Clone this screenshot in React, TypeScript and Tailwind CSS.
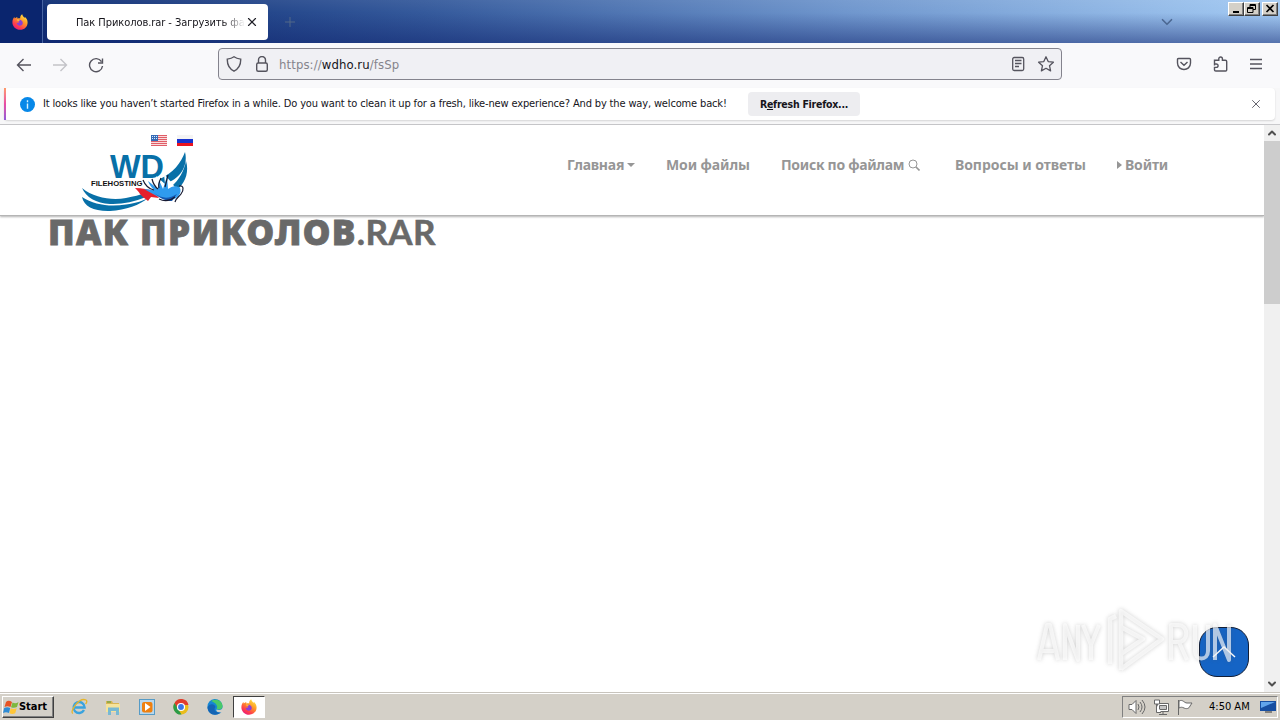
import type { ReactNode } from 'react'
import { ChevronDown, ChevronUp, Plus, X } from 'lucide-react'

interface IconProps {
    className?: string
}

interface NavItemProps {
    className: string
    children: ReactNode
}

function FirefoxIcon({ className }: IconProps) {
    return (
        <svg viewBox="0 0 16 16" className={className}>
            <defs>
                <linearGradient id="fx-body" x1="0.85" y1="0" x2="0.2" y2="1">
                    <stop offset="0" stopColor="#fff04a" />
                    <stop offset="0.4" stopColor="#ff9a26" />
                    <stop offset="0.75" stopColor="#ff3d4c" />
                    <stop offset="1" stopColor="#e31587" />
                </linearGradient>
            </defs>
            <path
                d="M10.2 0.2c.3 1.6 1.2 2.5 2.5 3.7.2-.3.1-.8 0-1.2 1.900 1.400 2.900 3.500 2.900 5.700 0 4.200-3.300 7.400-7.500 7.400S.4 12.500.4 8.500c0-2.300.8-4.100 2-5.400l.4 1.500C3.500 3.700 4.500 3.100 5.500 3.200c-.3.4-.3.9-.1 1.300 1-.5 2-.4 2.800-.2C8 2.700 8.700 1.200 10.200.2z"
                fill="url(#fx-body)"
            />
            <path d="M5.600 6.200c1.300-.7 3-.6 4.200.5 1.300 1.200 1.300 3.200.1 4.300-1.200 1-3 1-4.100 0-.8-.7-1.200-1.500-1.100-2.400 1 .6 2 .3 2.800-.5-.7-.3-1.500-.9-1.900-1.900z" fill="#8a3fd6" />
            <path d="M5 5.500c1.300-.4 2.100 0 2.900.7l-1.800 1.300C5.400 7 4.800 6.300 5 5.500z" fill="#ffb638" />
        </svg>
    )
}

function CaptionButton({ className = '', children }: { className?: string; children: ReactNode }) {
    return (
        <div className={`h-[14px] w-4 border border-t-white border-r-[#404040] border-b-[#404040] border-l-white bg-[#d4d0c8] shadow-[inset_-1px_-1px_0_#808080] ${className}`}>
            <svg viewBox="0 0 14 12" className="h-3 w-3.5" fill="none" stroke="black">
                {children}
            </svg>
        </div>
    )
}

function TitleBar() {
    return (
        <div className="relative flex h-[43px] bg-[linear-gradient(to_bottom,rgba(255,255,255,0.06),rgba(0,0,60,0)_30%,rgba(16,36,110,0.52)),linear-gradient(to_right,#0a286f,#34599b_33%,#6f96cd_66%,#a3caf3)]">
            <div className="flex w-[43px] items-center justify-center border-r border-[#4764a2] bg-[#0a256e] pr-0.5">
                <FirefoxIcon className="size-4" />
            </div>
            <div className="mt-1 ml-1 flex h-9 w-[221px] items-center rounded-[4px] bg-white">
                <div className="ml-[29px] w-[169px] overflow-hidden pt-0.5 text-[11px] tracking-[-0.07px] whitespace-nowrap text-[#15141a] [mask-image:linear-gradient(to_right,black_148px,transparent)]">
                    Пак Приколов.rar - Загрузить файл
                </div>
                <X className="size-3.5 text-[#202028]" strokeWidth={2} />
            </div>
            <Plus className="mt-[14px] ml-[14px] size-4 text-[#526888]" strokeWidth={1.500} />
            <ChevronDown className="mt-[13px] ml-[860px] size-[18px] text-[#4c6892]" strokeWidth={2.200} />
            <div className="absolute top-[2px] right-[2px] flex">
                <CaptionButton>
                    <path d="M4 9h6" strokeWidth="2" />
                </CaptionButton>
                <CaptionButton>
                    <path d="M5 4V1.500h5.500v5H8M5 2.500h5.500M2.500 4.500H8v5H2.500zM2.500 5.500H8" />
                </CaptionButton>
                <CaptionButton className="ml-0.5">
                    <path d="M3.500 2l7 7M10.500 2l-7 7" strokeWidth="1.700" />
                </CaptionButton>
            </div>
        </div>
    )
}

function Toolbar() {
    return (
        <div className="flex h-[45px] items-center bg-[#f9f9fb] pb-[3px] text-[#55545e]">
            <svg viewBox="0 0 90 16" className="mt-px ml-4 h-4 w-[90px]" fill="none" stroke="currentColor" strokeWidth="1.400">
                <path d="M15 8H1.500M7.500 2L1.500 8l6 6" />
                <path d="M37 8h13.500M44.500 2l6 6-6 6" stroke="#c3c3c8" />
                <path d="M85.500 4.600A6.500 6.500 0 1 0 86.500 9M86.500 1.500v4.500H82" />
            </svg>
            <div className="ml-[112px] flex h-8 w-[844px] items-center rounded-[4px] border border-[#84838d] bg-[#f0f0f4]">
                <svg viewBox="0 0 44 16" className="ml-[7px] h-4 w-11" fill="none" stroke="currentColor" strokeWidth="1.400">
                    <path d="M8 .8C10 2.300 12 2.800 14.700 3.100 14.900 8.500 12.500 13 8 15.200 3.500 13 1.100 8.500 1.300 3.100 4 2.800 6 2.300 8 .8z" />
                    <rect x="30.700" y="7" width="10.600" height="8.200" rx="1.500" />
                    <path d="M32.500 7V4a3.500 3.500 0 0 1 7 0v3" />
                </svg>
                <div className="ml-[9px] pt-0.5 text-[13px] tracking-[0.1px] text-[#85848c]">
                    https://<span className="text-[#15141a]">wdho.ru</span>/fsSp
                </div>
                <svg viewBox="0 0 46 18" className="mr-[5px] ml-auto h-[18px] w-[46px]" fill="none" stroke="currentColor" strokeWidth="1.300">
                    <rect x="2.700" y="2.500" width="11" height="13" rx="1.500" />
                    <path d="M5 5.500h6.500M5 8.500h6.500M5 11.500h4" />
                    <path d="M36 1.800l2.200 4.800 5.200.6-3.900 3.500 1.100 5.200-4.600-2.600-4.600 2.600 1.100-5.200-3.900-3.500 5.200-.6z" strokeLinejoin="round" />
                </svg>
            </div>
            <svg viewBox="0 0 88 16" className="mr-4 ml-auto h-4 w-[88px]" fill="none" stroke="currentColor" strokeWidth="1.400">
                <path d="M2.500 2.500h11c.8 0 1 .4 1 1V7c0 8.700-13 8.700-13 0V3.500c0-.6.200-1 1-1zM4.500 6L8 9.300 11.500 6" />
                <path d="M38.500 9.500v-5.300h4.300V2.800c0-2.500 3.600-2.500 3.600 0v1.400h3c.8 0 1.300.4 1.300 1.200v8.600c0 .6-.4 1-1 1h-9.900c-.8 0-1.300-.4-1.300-1v-2.600h1.700c2.500 0 2.500-3.400 0-3.400h-1.700" />
                <path d="M74 3.500h12M74 8h12M74 12.500h12" />
            </svg>
        </div>
    )
}

function NotificationBar() {
    return (
        <div className="h-[37px] border-b border-[#c9c9cc] bg-[#f7f7f8] pr-[5px] pl-1">
            <div className="flex h-8 items-center rounded-[4px] bg-white shadow-[0_1px_2px_rgba(0,0,0,0.14)]">
                <div className="h-full w-0.5 bg-linear-to-b from-[#ff9a68] via-[#e84ba4] to-[#9059d8]" />
                <svg viewBox="0 0 16 16" className="ml-[14px] size-[15px]">
                    <circle cx="8" cy="8" r="8" fill="#0788e8" />
                    <path d="M8 3.500v2M8 7v5.500" stroke="#d9f2ff" strokeWidth="1.500" />
                </svg>
                <div className="ml-2 w-[685px] text-[11px] tracking-[-0.15px] whitespace-nowrap text-[#15141a]">
                    It looks like you haven’t started Firefox in a while. Do you want to clean it up for a fresh, like-new experience? And by the way, welcome back!
                </div>
                <button className="ml-5 h-6 w-[112px] rounded-[4px] bg-[#ededf0] pt-px text-[10.500px] font-bold tracking-[-0.25px] whitespace-nowrap text-[#15141a]">
                    R<span className="underline">e</span>fresh Firefox...
                </button>
                <X className="mr-3 ml-auto size-3.5 text-[#65646d]" strokeWidth={1.700} />
            </div>
        </div>
    )
}

function SiteLogo() {
    return (
        <svg viewBox="0 0 112 61" className="h-[61px] w-28">
            <g fill="#0870a8">
                <path d="M0 37c12 10 30 12.500 44 10 8-1.500 14-3 18-5l2 4c-12 5-24 7.500-36 7C14 52.500 4 46 0 37z" />
                <path d="M0 46c12 8 28 10 44 7.500 10-1.500 18-4 22-6.500-8 7-22 12-38 13C12 60.500 2 55.500 0 46z" />
                <path d="M78 28C91 22 99 12 103 1c2 8 0 16-5 22-4 5-11 9-20 11z" />
                <path d="M90 35c7-6 12-15 14-25 3 10 0 20-7 27z" />
            </g>
            <text x="28" y="27.300" textLength="54" lengthAdjust="spacingAndGlyphs" fontFamily="Liberation Sans" fontWeight="700" fontSize="33" fill="#0870a8">WD</text>
            <path d="M60 29c4 3 6 6 12 10l14 7 8-8-4-6-8-9 1 10-9-8 2 9z" fill="white" />
            <text x="9" y="34.700" textLength="51.500" lengthAdjust="spacingAndGlyphs" fontFamily="Liberation Sans" fontWeight="700" fontSize="7" fill="#111111">FILEHOSTING</text>
            <path d="M53 37c7 0 14 1 19 4l5 6-8-1-3 4-5-4-3-3c-1-2-3-4-5-6z" fill="#e5202c" />
            <path d="M62 38l10 1c-3-3-5-6-6-9l10 8 1-9 4 9 4-13 1 13c4-3 8-4 12-1 2 5-2 10-8 12-6 1-14-3-28-11z" fill="#2f9bee" />
            <path d="M72 42c8 6 15 6 23 1l-5 7c-6 0-11-2-18-8z" fill="#1558b0" />
            <path d="M61 29c2 5 6 9 11 10M70 28c1 4 2 7 6 10M79 27c-2 4-3 7-2 10M86 24l-3 12M77 48c6 3 11 2 16-2M97 35c5-1 5 4 2 8-2 3-5 4-6 8" fill="none" stroke="#171a32" strokeWidth="1.200" />
        </svg>
    )
}

function NavItem({ className, children }: NavItemProps) {
    return <a className={`flex items-center whitespace-nowrap ${className}`}>{children}</a>
}

function SiteHeader() {
    return (
        <header className="flex h-[91px] items-start border-b border-[#b5b5b5] bg-white shadow-[0_1px_2px_rgba(0,0,0,0.3)]">
            <div className="ml-[82px] w-28 pt-[10px]">
                <div className="flex justify-end gap-[10px] pr-px">
                    <svg viewBox="0 0 16 11" className="h-[11px] w-4">
                        <path d="M0 0h16v11H0z" fill="#f9dadb" />
                        <path d="M0 .5h16M0 2.500h16M0 4.500h16M0 6.500h16M0 8.500h16M0 10.500h16" stroke="#e05d67" />
                        <path d="M0 0h7v6H0z" fill="#356bb5" />
                        <path d="M1 1.500h5M1 3.500h5" stroke="#d8e8ff" strokeDasharray="1 1" />
                    </svg>
                    <svg viewBox="0 0 16 11" className="h-[11px] w-4">
                        <path d="M0 0h16v4H0z" fill="#f4f4f4" />
                        <path d="M0 4h16v4H0z" fill="#1733ce" />
                        <path d="M0 8h16v3H0z" fill="#ea1420" />
                    </svg>
                </div>
                <div className="pt-[5px]">
                    <SiteLogo />
                </div>
            </div>
            <nav className="flex pt-[30px] font-['Noto_Sans'] text-sm leading-5 font-bold text-[#969696]">
                <NavItem className="ml-[373px] w-[99px] tracking-[-0.25px]">
                    Главная
                    <svg viewBox="0 0 8 4" className="ml-[3px] h-1 w-2"><path d="M0 0h8L4 4z" fill="currentColor" /></svg>
                </NavItem>
                <NavItem className="w-[115px] tracking-[-0.1px]">Мои файлы</NavItem>
                <NavItem className="w-[174px] tracking-[-0.3px]">
                    Поиск по файлам
                    <svg viewBox="0 0 12 12" className="ml-1 size-3" fill="none" stroke="currentColor">
                        <circle cx="5" cy="5" r="4" />
                        <path d="M8 8l3.500 3.500" strokeWidth="1.600" />
                    </svg>
                </NavItem>
                <NavItem className="w-[162px] tracking-[-0.05px]">Вопросы и ответы</NavItem>
                <NavItem className="tracking-[-0.15px]">
                    <svg viewBox="0 0 5 8" className="mr-[3px] h-2 w-[5px]"><path d="M0 0l5 4-5 4z" fill="currentColor" /></svg>
                    Войти
                </NavItem>
            </nav>
        </header>
    )
}

function Scrollbar() {
    return (
        <div className="flex w-4 flex-col items-center bg-[#f0f0f0] text-[#505050]">
            <div className="flex h-4 items-center"><ChevronUp className="size-3" strokeWidth={4} /></div>
            <div className="h-[163px] w-full bg-[#cdcdcd]" />
            <div className="mt-auto flex h-4 items-center"><ChevronDown className="size-3" strokeWidth={4} /></div>
        </div>
    )
}

function Watermark() {
    return (
        <svg viewBox="0 0 210 72" className="absolute right-[40px] bottom-[15px] h-[72px] w-[210px] drop-shadow-[0_0_2px_rgba(80,80,80,0.4)]" fill="none" stroke="white" strokeOpacity="0.65" strokeWidth="4" strokeLinejoin="round">
            <path d="M9 55l8-35h3l8 35M12 46h12M35 55V20l13 35V20M53 20l8 20v15M61 40l8-20" />
            <path d="M80 59V14l6-3M91 65V6l41 28-41 30M91 22l22 12-22 15v-15" strokeWidth="4.500" />
            <path d="M141 55V20h7c11 0 11 17 0 17h-7M149 37l8 18M165 20v26c0 10 13 10 13 0V20M185 55V20l14 35V20" />
        </svg>
    )
}

function Page() {
    return (
        <div className="relative flex min-h-0 flex-1">
            <main className="flex-1 bg-white">
                <SiteHeader />
                <h1 className="-mt-0.5 ml-[48px] flex h-9 items-center whitespace-nowrap text-[#696969]">
                    <span className="font-['Noto_Sans'] text-[35px] font-black tracking-[1.4px] [-webkit-text-stroke:0.8px_#696969]">ПАК ПРИКОЛОВ</span>
                    <span className="-mt-px font-['Lato'] text-[35px] font-bold tracking-[0.4px] [-webkit-text-stroke:0.5px_#696969]">.RAR</span>
                </h1>
            </main>
            <Scrollbar />
            <button className="absolute right-[31px] bottom-[15px] flex size-[50px] items-center justify-center rounded-[18px] border border-[#111d35] bg-[#1564c5]">
                <svg viewBox="0 0 24 12" className="h-3 w-6" fill="none" stroke="white" strokeWidth="1.500"><path d="M1 11L12 1l11 10" /></svg>
            </button>
            <Watermark />
        </div>
    )
}

function Taskbar() {
    return (
        <footer className="flex h-7 items-center border-t border-[#c8c4bd] bg-[#d4d0c8] pt-px shadow-[inset_0_1px_0_white]">
            <button className="ml-0.5 flex h-[22px] w-[52px] items-center border border-t-white border-r-[#404040] border-b-[#404040] border-l-white text-[11px] font-bold tracking-[-0.05px] shadow-[inset_-1px_-1px_0_#808080]">
                <svg viewBox="0 0 16 16" className="size-4 shrink-0">
                    <path d="M3 3c2-2 4-1 6 0L7.500 8c-2-1-4-1-6 0z" fill="#e65325" />
                    <path d="M9.500 3.500c2 1 4 1 6-.5L14 8c-2 1-4 1-6 .2z" fill="#7eb83e" />
                    <path d="M1.200 9c2-1 4-1 6 0L6 14c-2-1-4-1-6 0z" fill="#2e8bd5" />
                    <path d="M7.700 9.200c2 1 4 1 6 0l-1.500 5c-2 1-4 1-5.700 0z" fill="#ffc638" />
                </svg>
                Start
            </button>
            <svg viewBox="0 0 18 18" className="ml-4 size-[18px]" fill="none">
                <path d="M14 12A5.500 5.500 0 1 1 14.600 9.500H5" stroke="#3aa3de" strokeWidth="2.400" />
                <path d="M3 15.500C-1 14 9-1 16 2c1.500 1 .5 3-.5 4" stroke="#e6b52b" strokeWidth="1.300" />
            </svg>
            <svg viewBox="0 0 18 18" className="ml-4 size-[18px]">
                <path d="M2 3h6l1 2h6v9H2z" fill="#d9b655" />
                <path d="M2 6h14v8H2z" fill="#f5e39b" />
                <path d="M4 17V9.500h11V17h-3v-4H7v4z" fill="#78b9d3" />
                <path d="M3 4h4" stroke="#4e9b43" />
            </svg>
            <svg viewBox="0 0 18 18" className="ml-4 size-[18px]">
                <rect x="1.500" y="1.500" width="15" height="15" fill="#b9d7ec" stroke="#569bc6" />
                <rect x="4" y="4" width="10.500" height="10.500" rx="2" fill="#ef800f" />
                <path d="M7 5l5.500 4L7 13z" fill="white" />
            </svg>
            <svg viewBox="0 0 18 18" className="ml-4 size-[18px]">
                <circle cx="9" cy="9" r="7.500" fill="#eabd1c" />
                <path d="M2.500 5A7.500 7.500 0 0 1 16.500 7H9L6 12z" fill="#e03c2d" />
                <path d="M2.500 5L6 11l3.500 5.500A7.500 7.500 0 0 1 2.500 5z" fill="#2c9b48" />
                <circle cx="9" cy="9" r="3.500" fill="#3976e8" stroke="white" strokeWidth="1.200" />
            </svg>
            <svg viewBox="0 0 18 18" className="ml-4 size-[18px]">
                <path d="M1.500 9a7.500 7.500 0 0 1 15-1c.5 4-3 4.500-6 3.500-1 2 2 4 5 2.500C11 19 1.500 17 1.500 9z" fill="#1587d3" />
                <path d="M5 3c5-3 11-.5 11.500 4.500.5 4-3 4.500-6 3.500 2-3-.5-6-5.500-8z" fill="#49c969" />
                <path d="M1.500 9c3-4 7-3 8 0-2 2-1 6 5 5.500-6 5-13 1-13-5.500z" fill="#1464b4" />
            </svg>
            <div className="ml-[9px] flex h-[22px] w-8 items-center justify-center border border-t-[#404040] border-r-white border-b-white border-l-[#404040] bg-white">
                <FirefoxIcon className="size-4" />
            </div>
            <div className="mr-0.5 ml-auto flex h-[22px] w-[156px] items-center border border-t-[#808080] border-r-white border-b-white border-l-[#808080] text-[11px]">
                <svg viewBox="0 0 68 18" className="ml-[5px] h-[18px] w-[68px]" fill="white" stroke="#686868" strokeWidth="1">
                    <path d="M1 6.500h3l4-4v13l-4-4H1z" />
                    <path d="M10 6q2 3 0 6M12 4q4 5 0 10M14 2q6 7 0 14" fill="none" />
                    <path d="M29.500 5.500h11v8h-11z" />
                    <path d="M31.500 7.500h7v4h-7z" fill="#c4c4c4" />
                    <path d="M31 16.500h8M35 14v2M26.500 2v4h5V2zM28.500 6v8.500H33" />
                    <path d="M50.500 17V2M51 3c4-2 5 2 8 2h5l-2 3c-1 3-4 3-6 2s-3-1-5 0z" />
                </svg>
                <span className="ml-[13px] whitespace-nowrap">4:50 AM</span>
                <svg viewBox="0 0 16 16" className="mr-px ml-auto size-4">
                    <path d="M0 2h16v10H0z" fill="#174ea1" />
                    <path d="M1 3h14L1 9z" fill="#61a4eb" />
                    <path d="M5 13h7" stroke="#333" />
                </svg>
            </div>
        </footer>
    )
}

export default function App() {
    return (
        <div className="flex h-[720px] w-[1280px] flex-col overflow-hidden bg-white font-['DejaVu_Sans_Condensed','DejaVu_Sans',sans-serif] text-black">
            <TitleBar />
            <Toolbar />
            <NotificationBar />
            <Page />
            <Taskbar />
        </div>
    )
}
